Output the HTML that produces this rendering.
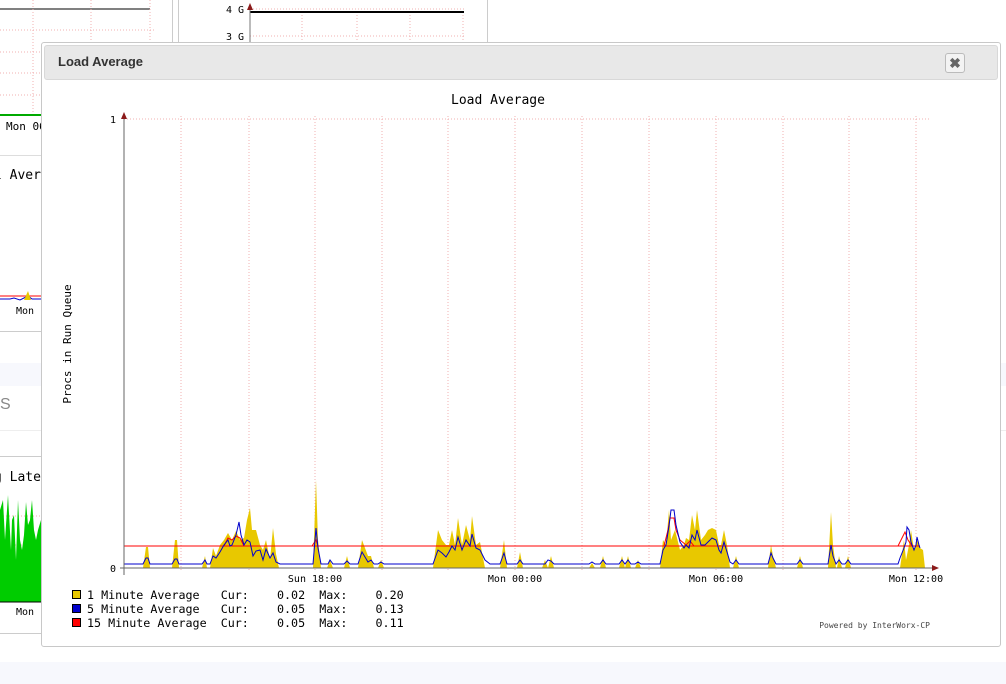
<!DOCTYPE html>
<html><head><meta charset="utf-8"><style>
html,body{margin:0;padding:0;width:1006px;height:684px;overflow:hidden;background:#fff;font-family:"Liberation Sans",sans-serif;position:relative}
.abs{position:absolute}
text.pre{white-space:pre}
</style></head><body>
<div class="abs" style="left:0;top:0;width:172px;height:331px;border-right:1px solid #ccc;border-bottom:1px solid #ccc"></div>
<div class="abs" style="left:0;top:155px;width:172px;height:1px;background:#ddd"></div>
<div class="abs" style="left:178px;top:0;width:308px;height:42px;border-left:1px solid #ccc;border-right:1px solid #ccc"></div>
<div class="abs" style="left:0;top:363px;width:1006px;height:23px;background:#f7f8fd"></div>
<div class="abs" style="left:0;top:430px;width:1006px;height:1px;background:#eee"></div>
<div class="abs" style="left:0;top:456px;width:172px;height:176px;border-right:1px solid #ccc;border-top:1px solid #ccc;border-bottom:1px solid #ccc"></div>
<div class="abs" style="left:0;top:662px;width:1006px;height:22px;background:#f7f8fd"></div>
<div class="abs" style="left:0;top:396px;font-size:16px;color:#888">S</div>
<svg class="abs" style="left:0;top:0" width="500" height="684">
<line x1="0" y1="9" x2="150" y2="9" stroke="#000"/>
<g stroke="#f2b0b0" stroke-dasharray="1,2">
<line x1="0" y1="30" x2="154" y2="30"/><line x1="0" y1="52" x2="154" y2="52"/><line x1="0" y1="73" x2="154" y2="73"/><line x1="0" y1="95" x2="154" y2="95"/>
<line x1="33" y1="0" x2="33" y2="115"/><line x1="91" y1="0" x2="91" y2="115"/><line x1="150" y1="0" x2="150" y2="115"/>
<line x1="302" y1="12" x2="302" y2="42"/><line x1="357" y1="12" x2="357" y2="42"/><line x1="410" y1="12" x2="410" y2="42"/><line x1="463" y1="12" x2="463" y2="42"/>
<line x1="250" y1="36" x2="466" y2="36"/><line x1="250" y1="9" x2="466" y2="9"/>
<line x1="0" y1="516" x2="40" y2="516"/><line x1="0" y1="545" x2="40" y2="545"/>
</g>
<line x1="0" y1="115" x2="41" y2="115" stroke="#0a0" stroke-width="2"/>
<line x1="250" y1="12" x2="464" y2="12" stroke="#000" stroke-width="2"/>
<line x1="250" y1="8" x2="250" y2="42" stroke="#777"/>
<polygon points="247,10 250,3 253,10" fill="#8b1a1a"/>
<text x="226" y="13" font-size="10" font-family="DejaVu Sans Mono">4 G</text>
<text x="226" y="40" font-size="10" font-family="DejaVu Sans Mono">3 G</text>
<text x="6" y="130" font-size="11" font-family="DejaVu Sans Mono">Mon 06</text>
<text x="-6" y="179" font-size="13" font-family="DejaVu Sans Mono">l Aver</text>
<line x1="0" y1="296" x2="41" y2="296" stroke="red"/>
<polyline points="0,299 10,299 14,298 20,300 28,296 32,299 41,299" stroke="#00c" fill="none"/>
<polygon points="24,300 28,291 31,300" fill="#e8c800"/>
<text x="16" y="314" font-size="10" font-family="DejaVu Sans Mono">Mon</text>
<text x="-6" y="481" font-size="13" font-family="DejaVu Sans Mono">g Late</text>
<path d="M0,602 L0,510 3,500 5,540 8,495 11,550 12,520 14,515 16,560 18,500 20,540 22,550 24,535 26,502 28,525 30,520 32,500 34,530 36,540 38,530 41,520 41,602Z" fill="#00cc00"/>
<line x1="0" y1="602" x2="41" y2="602" stroke="#000"/>
<text x="16" y="615" font-size="10" font-family="DejaVu Sans Mono">Mon</text>
</svg>
<div class="abs" style="left:41px;top:42px;width:958px;height:603px;background:#fff;border:1px solid #c8c8c8;border-radius:3px"></div>
<div class="abs" style="left:44px;top:45px;width:952px;height:33px;background:#e8e8e8;border:1px solid #d8d8d8;border-radius:3px"></div>
<div class="abs" style="left:58px;top:54px;font-size:13px;font-weight:bold;color:#333">Load Average</div>
<div class="abs" style="left:945px;top:53px;width:18px;height:18px;background:#f3f3f3;border:1px solid #bbb;border-radius:3px;text-align:center;line-height:18px;font-size:14px;font-weight:bold;color:#666">✖</div>
<svg class="abs" style="left:0;top:0" width="1006" height="684">
<text x="498" y="104" font-size="13" text-anchor="middle" font-family="DejaVu Sans Mono">Load Average</text>
<text transform="translate(71,344) rotate(-90)" font-size="11" text-anchor="middle" font-family="DejaVu Sans Mono">Procs in Run Queue</text>
<g stroke="#f0b0b0" stroke-dasharray="1,2">
<line x1="124" y1="119" x2="930" y2="119"/>
<line x1="181" y1="116" x2="181" y2="572"/><line x1="249" y1="116" x2="249" y2="572"/><line x1="315" y1="116" x2="315" y2="572"/><line x1="382" y1="116" x2="382" y2="572"/><line x1="448" y1="116" x2="448" y2="572"/><line x1="515" y1="116" x2="515" y2="572"/><line x1="582" y1="116" x2="582" y2="572"/><line x1="649" y1="116" x2="649" y2="572"/><line x1="716" y1="116" x2="716" y2="572"/><line x1="783" y1="116" x2="783" y2="572"/><line x1="849" y1="116" x2="849" y2="572"/><line x1="916" y1="116" x2="916" y2="572"/>
</g>
<path fill="#e8c800" d="M143,568 L146,547 148,547 150,568Z M172,568 L175,540 177,540 179,568Z M202,568 L205,556 207,568Z M210,568 L213,548 216,556 220,545 224,540 228,533 232,540 236,531 240,540 244,538 247,520 250,508 252,530 256,530 260,545 263,550 266,540 270,560 273,528 276,554 279,568Z M313,568 L316,480 318,540 321,568Z M327,568 L330,560 333,568Z M344,568 L347,556 350,568Z M358,568 L362,540 365,548 368,556 371,556 374,568Z M378,568 L381,560 384,568Z M433,568 L438,530 442,540 446,545 449,545 452,530 455,545 458,518 462,545 466,525 470,540 472,516 476,545 480,542 485,568Z M500,568 L504,540 507,568Z M517,568 L520,552 523,568Z M542,568 L545,560 548,568 L551,556 554,568Z M589,568 L592,563 595,568Z M600,568 L603,556 606,568Z M619,568 L622,556 625,568 628,556 631,568Z M635,568 L638,560 641,568Z M660,568 L663,540 666,545 669,510 671,540 675,530 680,550 684,545 686,538 689,540 692,515 695,530 697,510 701,540 705,535 708,530 712,528 716,530 719,545 721,545 724,530 727,545 730,568Z M733,568 L736,556 739,568Z M768,568 L771,545 773,556 776,568Z M797,568 L800,556 803,568Z M828,568 L831,512 833,545 836,568Z M837,568 L839,556 842,568 845,568 848,556 851,568Z M900,568 L904,540 906,560 909,545 911,530 914,550 917,540 920,548 923,550 925,568Z"/>
<line x1="124" y1="546" x2="920" y2="546" stroke="#f00"/>
<polyline fill="none" stroke="#f00" points="224,546 228,538 232,540 236,536 240,538 244,546"/>
<polyline fill="none" stroke="#f00" points="312,546 316,540 318,546"/>
<polyline fill="none" stroke="#f00" points="664,546 668,530 670,518 674,518 676,530 680,540 686,545 690,541 694,546"/>
<polyline fill="none" stroke="#f00" points="898,546 902,538 905,532 908,540 912,546"/>
<polyline fill="none" stroke="#0000cc" points="124,564 143,564 146,558 148,558 150,564 172,564 175,559 177,559 179,564 202,564 205,560 207,564 210,564 213,556 216,558 220,552 224,545 228,540 230,546 232,545 236,535 239,522 241,535 244,545 247,540 250,542 253,556 256,551 260,550 263,560 266,549 270,558 273,553 276,562 280,564 313,564 316,528 318,548 321,564 328,564 330,560 333,564 344,564 347,561 350,564 358,564 362,552 365,557 368,562 371,560 374,564 378,564 381,562 384,564 433,564 438,550 442,553 446,557 449,552 452,546 455,550 458,537 462,550 466,540 470,546 472,534 476,548 480,550 485,560 490,564 500,564 504,553 507,564 517,564 520,560 523,564 545,564 548,560 551,561 554,564 589,564 592,562 595,564 600,564 603,560 606,564 619,564 622,560 625,564 628,560 631,564 635,564 638,562 641,564 660,564 663,550 666,545 669,526 671,510 674,510 676,525 680,542 684,548 686,545 689,548 692,535 695,540 697,530 701,545 705,545 708,542 712,538 716,540 719,550 721,553 724,542 727,552 730,562 733,564 736,560 739,564 768,564 771,553 773,558 776,564 797,564 800,560 803,564 828,564 831,545 833,556 836,564 839,560 842,564 845,564 848,560 851,564 898,564 900,558 904,548 906,542 907,527 909,530 911,542 914,550 916,545 917,537 919,545 920,548"/>
<line x1="124" y1="119" x2="124" y2="575" stroke="#666"/>
<line x1="120" y1="568" x2="933" y2="568" stroke="#666"/>
<polygon points="121,119 124,112 127,119" fill="#8b1a1a"/>
<polygon points="932,565 939,568 932,571" fill="#8b1a1a"/>
<text x="116" y="123" font-size="10" text-anchor="end" font-family="DejaVu Sans Mono">1</text>
<text x="116" y="572" font-size="10" text-anchor="end" font-family="DejaVu Sans Mono">0</text>
<g font-size="10" text-anchor="middle" font-family="DejaVu Sans Mono">
<text x="315" y="582">Sun 18:00</text><text x="515" y="582">Mon 00:00</text><text x="716" y="582">Mon 06:00</text><text x="916" y="582">Mon 12:00</text>
</g>
<rect x="72.5" y="590.5" width="8" height="8" fill="#e8c800" stroke="#000"/>
<rect x="72.5" y="604.5" width="8" height="8" fill="#0000cc" stroke="#000"/>
<rect x="72.5" y="618.5" width="8" height="8" fill="#f00" stroke="#000"/>
<g font-size="11.7" font-family="DejaVu Sans Mono">
<text class="pre" x="87" y="599">1 Minute Average   Cur:    0.02  Max:    0.20</text>
<text class="pre" x="87" y="613">5 Minute Average   Cur:    0.05  Max:    0.13</text>
<text class="pre" x="87" y="627">15 Minute Average  Cur:    0.05  Max:    0.11</text>
</g>
<text x="930" y="628" font-size="8" text-anchor="end" fill="#444" font-family="DejaVu Sans Mono">Powered by InterWorx-CP</text>
</svg>
</body></html>
